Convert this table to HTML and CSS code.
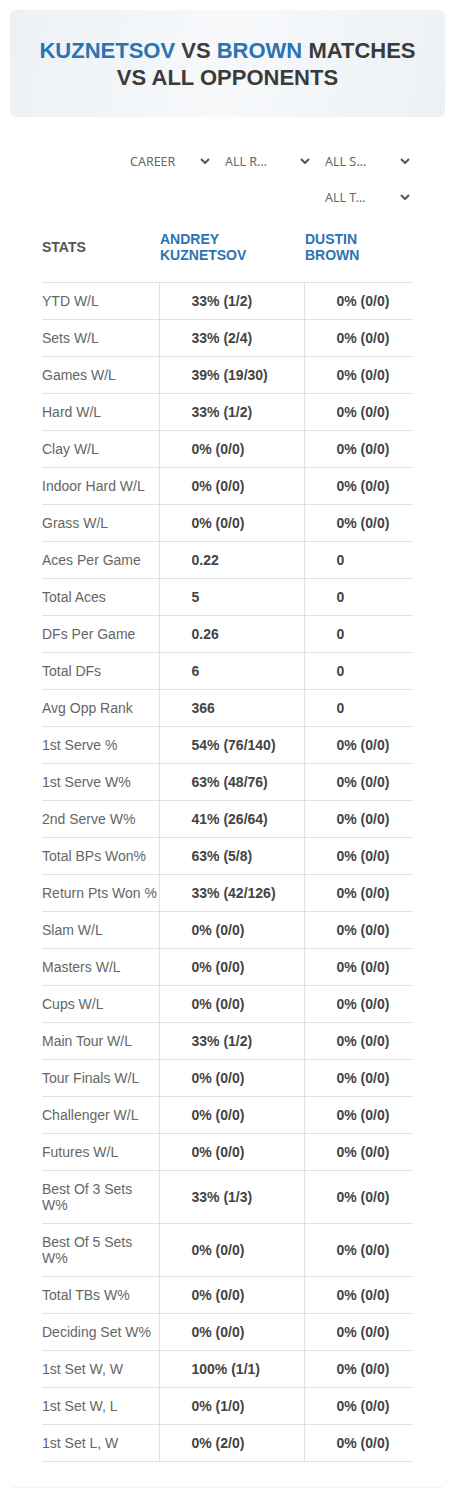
FILE: index.html
```html
<!DOCTYPE html>
<html>
<head>
<meta charset="utf-8">
<link rel="stylesheet" href="styles.css">
</head>
<body>
<div class="hero">
  <h1><span class="blue">KUZNETSOV</span> VS <span class="blue">BROWN</span> MATCHES<br>VS ALL OPPONENTS</h1>
</div>
<div class="card">
  <div class="filters">
    <div class="sel sel-first"><span>CAREER</span><svg viewBox="0 0 10 6" class="chev"><path d="M1 1l4 4 4-4" /></svg></div>
    <div class="sel"><span>ALL R…</span><svg viewBox="0 0 10 6" class="chev"><path d="M1 1l4 4 4-4" /></svg></div>
    <div class="sel"><span>ALL S…</span><svg viewBox="0 0 10 6" class="chev"><path d="M1 1l4 4 4-4" /></svg></div>
    <div class="sel"><span>ALL T…</span><svg viewBox="0 0 10 6" class="chev"><path d="M1 1l4 4 4-4" /></svg></div>
  </div>
  <table class="stats">
    <thead>
      <tr><th class="c1">STATS</th><th class="c2 name">ANDREY<br>KUZNETSOV</th><th class="c3 name">DUSTIN<br>BROWN</th></tr>
    </thead>
    <tbody>
      <tr><td>YTD W/L</td><td>33% (1/2)</td><td>0% (0/0)</td></tr>
      <tr><td>Sets W/L</td><td>33% (2/4)</td><td>0% (0/0)</td></tr>
      <tr><td>Games W/L</td><td>39% (19/30)</td><td>0% (0/0)</td></tr>
      <tr><td>Hard W/L</td><td>33% (1/2)</td><td>0% (0/0)</td></tr>
      <tr><td>Clay W/L</td><td>0% (0/0)</td><td>0% (0/0)</td></tr>
      <tr><td>Indoor Hard W/L</td><td>0% (0/0)</td><td>0% (0/0)</td></tr>
      <tr><td>Grass W/L</td><td>0% (0/0)</td><td>0% (0/0)</td></tr>
      <tr><td>Aces Per Game</td><td>0.22</td><td>0</td></tr>
      <tr><td>Total Aces</td><td>5</td><td>0</td></tr>
      <tr><td>DFs Per Game</td><td>0.26</td><td>0</td></tr>
      <tr><td>Total DFs</td><td>6</td><td>0</td></tr>
      <tr><td>Avg Opp Rank</td><td>366</td><td>0</td></tr>
      <tr><td>1st Serve %</td><td>54% (76/140)</td><td>0% (0/0)</td></tr>
      <tr><td>1st Serve W%</td><td>63% (48/76)</td><td>0% (0/0)</td></tr>
      <tr><td>2nd Serve W%</td><td>41% (26/64)</td><td>0% (0/0)</td></tr>
      <tr><td>Total BPs Won%</td><td>63% (5/8)</td><td>0% (0/0)</td></tr>
      <tr><td class="nowrap">Return Pts Won %</td><td>33% (42/126)</td><td>0% (0/0)</td></tr>
      <tr><td>Slam W/L</td><td>0% (0/0)</td><td>0% (0/0)</td></tr>
      <tr><td>Masters W/L</td><td>0% (0/0)</td><td>0% (0/0)</td></tr>
      <tr><td>Cups W/L</td><td>0% (0/0)</td><td>0% (0/0)</td></tr>
      <tr><td>Main Tour W/L</td><td>33% (1/2)</td><td>0% (0/0)</td></tr>
      <tr><td>Tour Finals W/L</td><td>0% (0/0)</td><td>0% (0/0)</td></tr>
      <tr><td>Challenger W/L</td><td>0% (0/0)</td><td>0% (0/0)</td></tr>
      <tr><td>Futures W/L</td><td>0% (0/0)</td><td>0% (0/0)</td></tr>
      <tr><td>Best Of 3 Sets W%</td><td>33% (1/3)</td><td>0% (0/0)</td></tr>
      <tr><td>Best Of 5 Sets W%</td><td>0% (0/0)</td><td>0% (0/0)</td></tr>
      <tr><td>Total TBs W%</td><td>0% (0/0)</td><td>0% (0/0)</td></tr>
      <tr><td class="nowrap">Deciding Set W%</td><td>0% (0/0)</td><td>0% (0/0)</td></tr>
      <tr><td>1st Set W, W</td><td>100% (1/1)</td><td>0% (0/0)</td></tr>
      <tr><td>1st Set W, L</td><td>0% (1/0)</td><td>0% (0/0)</td></tr>
      <tr><td>1st Set L, W</td><td>0% (2/0)</td><td>0% (0/0)</td></tr>
    </tbody>
  </table>
</div>
</body>
</html>
```
FILE: styles.css
```css
* { box-sizing: border-box; }
body {
  margin: 0;
  padding: 10px;
  background: #fff;
  font-family: "Liberation Sans", Arial, sans-serif;
  color: #444;
}
.hero {
  height: 107px;
  border-radius: 6px;
  background: linear-gradient(100deg, #edf1f5 0%, #f7f9fb 50%, #edf1f5 100%);
  display: flex;
  align-items: center;
  justify-content: center;
}
.hero h1 {
  margin: 0;
  font-size: 22px;
  line-height: 27px;
  font-weight: 700;
  text-align: center;
  color: #3b3b3b;
}
.blue { color: #2a74b4; }
.card {
  margin-top: 10px;
  padding: 20px 32px 25px;
  border-radius: 6px;
  box-shadow: 0 1px 2px rgba(0,0,0,0.06);
}
.filters {
  display: flex;
  flex-wrap: wrap;
  justify-content: flex-end;
  gap: 8px 10px;
}
.sel {
  width: 90px;
  height: 28px;
  display: flex;
  align-items: center;
  justify-content: space-between;
  padding: 0 3px 0 2px;
  font-family: "Noto Sans", "Open Sans", sans-serif;
  font-size: 12.5px;
  color: #666;
}
.sel-first { padding-left: 7px; }
.chev {
  width: 10px;
  height: 6px;
  fill: none;
  stroke: #555;
  stroke-width: 2;
}
.stats {
  margin-top: 10px;
  width: 100%;
  border-collapse: collapse;
  table-layout: fixed;
}
.stats th {
  text-align: left;
  font-size: 14px;
  line-height: 16px;
  font-weight: 700;
  padding: 10px 0 19px;
  vertical-align: middle;
  border-bottom: 1px solid #e2e2e2;
}
.stats th.c1 { width: 117px; color: #555; }
.stats th.c2 { width: 145px; padding-left: 1px; }
.stats th.c3 { padding-left: 1px; }
.stats th.name { color: #2a74b4; }
.stats td {
  font-size: 14px;
  line-height: 16px;
  padding: 10px 0;
  border-bottom: 1px solid #e2e2e2;
  vertical-align: middle;
}
.stats td:first-child {
  color: #666;
  padding-right: 2px;
}
.stats td.nowrap { white-space: nowrap; }
.stats td + td {
  border-left: 1px solid #e2e2e2;
  padding-left: 32px;
  font-weight: 700;
  color: #444;
}
```
